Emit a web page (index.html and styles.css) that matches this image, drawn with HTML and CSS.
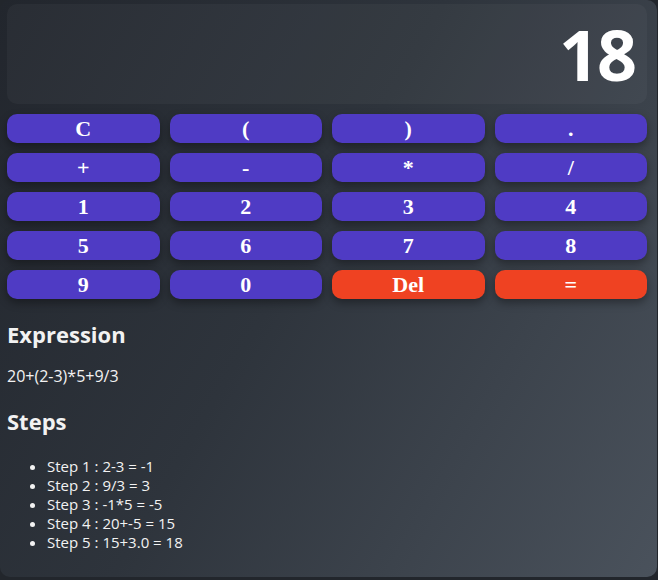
FILE: index.html
```html
<!DOCTYPE html>
<html lang="en">
<head>
<meta charset="utf-8">
<title>Calculator</title>
<link rel="stylesheet" href="styles.css">
</head>
<body>
<div class="card">
  <div class="display">18</div>
  <div class="keys">
    <button class="key">C</button>
    <button class="key">(</button>
    <button class="key">)</button>
    <button class="key">.</button>
    <button class="key">+</button>
    <button class="key">-</button>
    <button class="key">*</button>
    <button class="key">/</button>
    <button class="key">1</button>
    <button class="key">2</button>
    <button class="key">3</button>
    <button class="key">4</button>
    <button class="key">5</button>
    <button class="key">6</button>
    <button class="key">7</button>
    <button class="key">8</button>
    <button class="key">9</button>
    <button class="key">0</button>
    <button class="key key-red">Del</button>
    <button class="key key-red">=</button>
  </div>
  <h2 class="heading">Expression</h2>
  <p class="expr">20+(2-3)*5+9/3</p>
  <h2 class="heading">Steps</h2>
  <ul class="steps">
    <li>Step 1 : 2-3 = -1</li>
    <li>Step 2 : 9/3 = 3</li>
    <li>Step 3 : -1*5 = -5</li>
    <li>Step 4 : 20+-5 = 15</li>
    <li>Step 5 : 15+3.0 = 18</li>
  </ul>
</div>
</body>
</html>
```
FILE: styles.css
```css
html, body {
  margin: 0;
  padding: 0;
  background: #22262c;
}
body {
  font-family: "Open Sans", "Noto Sans", sans-serif;
  color: #f2f2f2;
}
.card {
  width: 657px;
  box-sizing: border-box;
  padding: 4px 10px 10px 7px;
  border-radius: 10px;
  background: linear-gradient(120deg, #22262d 0%, #2e343c 45%, #4a525c 100%);
  height: 577px;
}
.display {
  height: 100px;
  box-sizing: border-box;
  border-radius: 10px;
  background: rgba(255, 255, 255, 0.035);
  text-align: right;
  font-size: 70px;
  font-weight: 700;
  letter-spacing: -2px;
  line-height: 100px;
  padding-right: 12px;
  color: #fff;
}
.keys {
  margin-top: 10px;
  display: grid;
  grid-template-columns: repeat(4, 1fr);
  gap: 10px;
}
.key {
  height: 29px;
  border: none;
  border-radius: 10px;
  background: #4f3bc4;
  color: #fff;
  font-family: "Liberation Serif", serif;
  font-weight: bold;
  font-size: 22px;
  line-height: 29px;
  padding: 0;
  box-shadow: 0 4px 8px rgba(0, 0, 0, 0.35);
}
.key-red {
  background: #ef4222;
}
.heading {
  font-size: 22px;
  font-weight: 700;
  margin: 20px 0 0;
  line-height: 30px;
}
.expr {
  font-size: 16px;
  margin: 17px 0 18px;
  line-height: 20px;
}
.steps {
  margin: 21px 0 0;
  padding-left: 40px;
  font-size: 15px;
  line-height: 19px;
}
```
